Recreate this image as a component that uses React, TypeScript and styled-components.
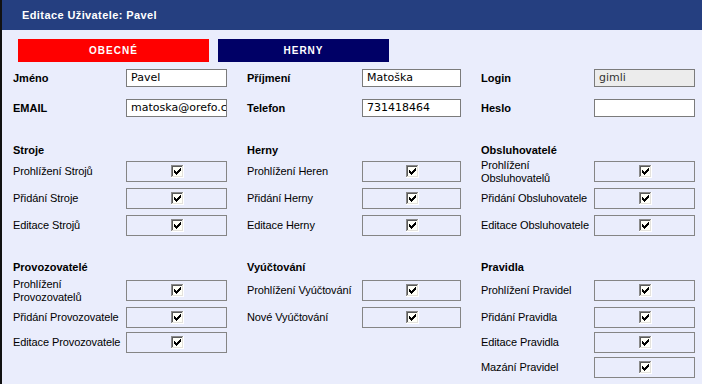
import React from "react";
import styled, { createGlobalStyle } from "styled-components";

const Global = createGlobalStyle`
  html, body { margin: 0; padding: 0; background: #eaedfc; }
  body { font-family: "Liberation Sans", Arial, sans-serif; font-size: 11px; color: #000; }
`;

const Page = styled.div`
  width: 700px;
  height: 384px;
  border-left: 2px solid #111;
  background: #eaedfc;
  overflow: hidden;
`;

const Header = styled.div`
  height: 30px;
  background: #253f80;
  color: #fff;
  font-weight: bold;
  font-size: 11px;
  line-height: 30px;
  padding-left: 20px;
  letter-spacing: 0.4px;
`;

const Tabs = styled.div`
  display: flex;
  gap: 9px;
  padding: 9px 0 0 16px;
`;

const Tab = styled.div<{ $bg: string; $w: number }>`
  width: ${(p) => p.$w}px;
  height: 23px;
  background: ${(p) => p.$bg};
  color: #fff;
  font-weight: bold;
  font-size: 10px;
  letter-spacing: 1px;
  display: flex;
  align-items: center;
  justify-content: center;
`;

const Columns = styled.div<{ $top: number }>`
  display: grid;
  grid-template-columns: 214px 214px 214px;
  column-gap: 20px;
  padding-left: 11px;
  margin-top: ${(p) => p.$top}px;
`;

const Group = styled.div<{ $label: number; $rows: string }>`
  display: grid;
  grid-template-columns: ${(p) => p.$label}px 1fr;
  grid-template-rows: ${(p) => p.$rows};
  align-items: center;
`;

const FormLabel = styled.div`
  font-weight: bold;
  font-size: 11px;
`;

const Input = styled.div<{ $gray?: boolean }>`
  height: 16px;
  border: 1px solid #7b7b7b;
  background: ${(p) => (p.$gray ? "#ececec" : "#fff")};
  font-family: "DejaVu Sans", Verdana, sans-serif;
  font-size: 11px;
  line-height: 16px;
  padding-left: 4px;
  white-space: nowrap;
  overflow: hidden;
  color: ${(p) => (p.$gray ? "#333" : "#000")};
`;

const Section = styled.div`
  display: flex;
  flex-direction: column;
`;

const SectionTitle = styled.div<{ $mb: number }>`
  font-weight: bold;
  font-size: 11px;
  height: 16px;
  line-height: 16px;
  margin-bottom: ${(p) => p.$mb}px;
`;

const ItemLabel = styled.div`
  font-size: 11px;
  line-height: 13px;
  letter-spacing: -0.1px;
`;

const Box = styled.div`
  height: 19px;
  border: 1px solid #858585;
  display: flex;
  align-items: center;
  justify-content: center;
  padding-left: 1px;
`;

const Check = () => (
  <svg width="13" height="13" viewBox="0 0 13 13" shapeRendering="crispEdges">
    <rect x="0" y="0" width="13" height="13" fill="#fffff8" />
    <path d="M0 0H12V1H1V12H0Z" fill="#8a8a8a" />
    <path d="M1 1H11V2H2V11H1Z" fill="#5a5a5a" />
    <path d="M12 0H13V13H0V12H12Z" fill="#fff" />
    <path d="M11 1H12V12H1V11H11Z" fill="#e4e2dc" />
    <path
      d="M9 3h1v3h-1zM8 4h1v3h-1zM7 5h1v3h-1zM6 6h1v3h-1zM5 7h1v3h-1zM4 6h1v3h-1zM3 5h1v3h-1z"
      fill="#000"
    />
  </svg>
);

type Col = { title: string; items: string[] };

const topCols: Col[] = [
  { title: "Stroje", items: ["Prohlížení Strojů", "Přidání Stroje", "Editace Strojů"] },
  { title: "Herny", items: ["Prohlížení Heren", "Přidání Herny", "Editace Herny"] },
  {
    title: "Obsluhovatelé",
    items: ["Prohlížení Obsluhovatelů", "Přidání Obsluhovatele", "Editace Obsluhovatele"],
  },
];

const bottomCols: Col[] = [
  {
    title: "Provozovatelé",
    items: ["Prohlížení Provozovatelů", "Přidání Provozovatele", "Editace Provozovatele"],
  },
  { title: "Vyúčtování", items: ["Prohlížení Vyúčtování", "Nové Vyúčtování"] },
  {
    title: "Pravidla",
    items: ["Prohlížení Pravidel", "Přidání Pravidla", "Editace Pravidla", "Mazání Pravidel"],
  },
];

const labelW = [113, 115, 113];

const PermSection = ({ cols, rows, top, mb }: { cols: Col[]; rows: string; top: number; mb: number }) => (
  <Columns $top={top}>
    {cols.map((c, i) => (
      <Section key={c.title}>
        <SectionTitle $mb={mb}>{c.title}</SectionTitle>
        <Group $label={labelW[i]} $rows={rows}>
          {c.items.map((it) => (
            <React.Fragment key={it}>
              <ItemLabel>{it}</ItemLabel>
              <Box>
                <Check />
              </Box>
            </React.Fragment>
          ))}
        </Group>
      </Section>
    ))}
  </Columns>
);

const formCols = [
  [
    ["Jméno", "Pavel"],
    ["EMAIL", "matoska@orefo.cz"],
  ],
  [
    ["Příjmení", "Matoška"],
    ["Telefon", "731418464"],
  ],
  [
    ["Login", "gimli"],
    ["Heslo", ""],
  ],
];

export default function App() {
  return (
    <Page>
      <Global />
      <Header>Editace Uživatele: Pavel</Header>
      <Tabs>
        <Tab $bg="#ff0000" $w={191}>OBECNÉ</Tab>
        <Tab $bg="#000066" $w={171}>HERNY</Tab>
      </Tabs>
      <Columns $top={1}>
        {formCols.map((rows, i) => (
          <Group key={i} $label={labelW[i]} $rows="30px 30px">
            {rows.map(([l, v]) => (
              <React.Fragment key={l}>
                <FormLabel>{l}</FormLabel>
                <Input $gray={l === "Login"}>{v}</Input>
              </React.Fragment>
            ))}
          </Group>
        ))}
      </Columns>
      <PermSection cols={topCols} rows="27px 27px 27px" top={19} mb={0} />
      <PermSection cols={bottomCols} rows="27px 26px 25px 24px" top={20} mb={2} />
    </Page>
  );
}
